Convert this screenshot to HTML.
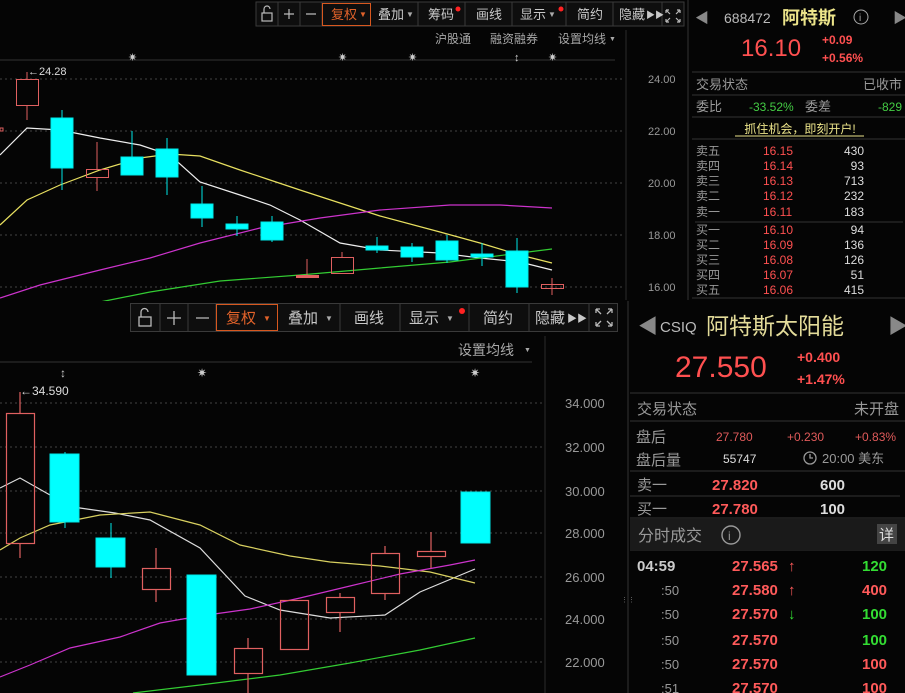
<!DOCTYPE html>
<html><head><meta charset="utf-8"><style>
html,body{margin:0;padding:0;background:#000;width:905px;height:693px;overflow:hidden}
svg{display:block}
text{font-family:"Liberation Sans","Noto Sans CJK SC",sans-serif}
</style></head><body>
<svg width="905" height="693" viewBox="0 0 905 693" xmlns="http://www.w3.org/2000/svg">
<rect width="905" height="693" fill="#050505"/>

<!-- ============ TOP WINDOW ============ -->
<g stroke="#3a3a3a" fill="#0e0e0e">
<rect x="256" y="2" width="428" height="24"/>
</g>
<g stroke="#3a3a3a">
<line x1="278" y1="2" x2="278" y2="26"/><line x1="300" y1="2" x2="300" y2="26"/><line x1="322" y1="2" x2="322" y2="26"/>
<line x1="418" y1="2" x2="418" y2="26"/><line x1="465" y1="2" x2="465" y2="26"/><line x1="512" y1="2" x2="512" y2="26"/>
<line x1="566" y1="2" x2="566" y2="26"/><line x1="613" y1="2" x2="613" y2="26"/><line x1="662" y1="2" x2="662" y2="26"/>
</g>
<rect x="322.5" y="3.5" width="48" height="22" fill="none" stroke="#d8581f"/>
<g font-size="13" fill="#c8c8c8">
<text x="331" y="19" fill="#e0622a">复权</text><text x="359" y="17" font-size="8" fill="#e0622a">▼</text>
<text x="378" y="19">叠加</text><text x="406" y="17" font-size="8" fill="#aaa">▼</text>
<text x="428" y="19">筹码</text><circle cx="458" cy="9" r="2.5" fill="#f22"/>
<text x="476" y="19">画线</text>
<text x="520" y="19">显示</text><text x="548" y="17" font-size="8" fill="#aaa">▼</text><circle cx="561" cy="9" r="2.5" fill="#f22"/>
<text x="577" y="19">简约</text>
<text x="619" y="19">隐藏</text><text x="646" y="18" font-size="9">▶▶</text>
</g>
<g stroke="#bbb" fill="none" stroke-width="1.2">
<rect x="262" y="13" width="10" height="8"/><path d="M264 13 v-4 a3 3 0 0 1 6 0"/>
<path d="M284 14 h10 M289 9 v10 M306 14 h10"/>
<path d="M666 10 l4 4 M666 10 h3 M666 10 v3 M680 10 l-4 4 M680 10 h-3 M680 10 v3 M666 22 l4 -4 M666 22 h3 M666 22 v-3 M680 22 l-4 -4 M680 22 h-3 M680 22 v-3"/>
</g>
<g font-size="12" fill="#a8a8a8">
<text x="435" y="43">沪股通</text><text x="490" y="43">融资融券</text><text x="558" y="43">设置均线</text><text x="609" y="41" font-size="7">▼</text>
</g>
<line x1="0" y1="60" x2="615" y2="60" stroke="#333"/>
<g fill="#ccc" font-size="11"><text x="128" y="61">✷</text><text x="338" y="61">✷</text><text x="408" y="61">✷</text><text x="514" y="61">↕</text><text x="548" y="61">✷</text></g>
<!-- grid -->
<g stroke="#444" stroke-dasharray="2,3">
<line x1="0" y1="79" x2="625" y2="79"/><line x1="0" y1="131" x2="625" y2="131"/><line x1="0" y1="183" x2="625" y2="183"/><line x1="0" y1="235" x2="625" y2="235"/><line x1="0" y1="287" x2="625" y2="287"/>
</g>
<line x1="626" y1="30" x2="626" y2="300" stroke="#2a2a2a"/>
<g font-family="Liberation Mono" font-size="11" fill="#999">
<text x="648" y="83">24.00</text><text x="648" y="135">22.00</text><text x="648" y="187">20.00</text><text x="648" y="239">18.00</text><text x="648" y="291">16.00</text>
</g>
<!-- MAs top -->
<g fill="none" stroke-width="1.2">
<polyline stroke="#eeeeee" points="0,155 27,128 60,130 100,138 140,145 170,155 200,182 240,195 270,205 300,220 340,243 380,250 440,253 480,258 520,262 552,270"/>
<polyline stroke="#e8e060" points="0,225 27,200 60,185 100,170 140,158 170,154 200,156 240,170 270,180 300,190 340,203 380,216 440,232 480,243 520,255 552,263"/>
<polyline stroke="#cc33cc" points="0,298 40,285 100,270 150,258 200,243 260,228 320,218 380,210 450,205 500,205 552,208"/>
<polyline stroke="#33cc33" points="100,302 150,292 220,281 300,275 380,268 450,262 520,253 552,249"/>
</g>
<!-- candles top -->
<g stroke="#e06060" fill="none">
<rect x="0" y="128" width="3" height="3"/>
<line x1="27" y1="72" x2="27" y2="79"/><line x1="27" y1="105" x2="27" y2="120"/><rect x="16.5" y="79.5" width="22" height="26"/>
<line x1="97" y1="142" x2="97" y2="169"/><line x1="97" y1="177" x2="97" y2="191"/><rect x="86.5" y="169.5" width="22" height="8"/>
<line x1="307" y1="259" x2="307" y2="276"/><rect x="296.5" y="275.5" width="22" height="2" fill="#e06060"/>
<line x1="342" y1="252" x2="342" y2="257"/><rect x="331.5" y="257.5" width="22" height="16"/>
<line x1="552" y1="278" x2="552" y2="295"/><rect x="541.5" y="284.5" width="22" height="4"/>
</g>
<g stroke="#00e8e8" fill="#00ffff">
<line x1="62" y1="110" x2="62" y2="190"/><rect x="51" y="118" width="22" height="50"/>
<line x1="132" y1="131" x2="132" y2="175"/><rect x="121" y="157" width="22" height="18"/>
<line x1="167" y1="138" x2="167" y2="195"/><rect x="156" y="149" width="22" height="28"/>
<line x1="202" y1="186" x2="202" y2="227"/><rect x="191" y="204" width="22" height="14"/>
<line x1="237" y1="216" x2="237" y2="236"/><rect x="226" y="224" width="22" height="5"/>
<line x1="272" y1="216" x2="272" y2="242"/><rect x="261" y="222" width="22" height="18"/>
<line x1="377" y1="237" x2="377" y2="253"/><rect x="366" y="246" width="22" height="4"/>
<line x1="412" y1="243" x2="412" y2="262"/><rect x="401" y="247" width="22" height="10"/>
<line x1="447" y1="235" x2="447" y2="263"/><rect x="436" y="241" width="22" height="19"/>
<line x1="482" y1="243" x2="482" y2="266"/><rect x="471" y="254" width="22" height="3"/>
<line x1="517" y1="238" x2="517" y2="293"/><rect x="506" y="251" width="22" height="36"/>
</g>
<text x="28" y="75" font-family="Liberation Mono" font-size="11" fill="#ddd">←24.28</text>

<!-- top right panel -->
<line x1="688" y1="0" x2="688" y2="300" stroke="#333"/>
<g font-size="13">
<text x="695" y="23" fill="#888" font-size="14">◀</text>
<text x="724" y="23" fill="#bbb" font-size="14">688472</text>
<text x="782" y="24" fill="#ece48a" font-size="18" font-weight="bold">阿特斯</text>
<circle cx="861" cy="17" r="7" fill="none" stroke="#aaa"/><text x="859" y="21" fill="#aaa" font-size="10">i</text>
<text x="893" y="23" fill="#888" font-size="14">▶</text>
<text x="741" y="56" fill="#ff5050" font-size="24">16.10</text>
<text x="822" y="44" fill="#ff5050" font-size="12" font-weight="bold">+0.09</text>
<text x="822" y="62" fill="#ff5050" font-size="12" font-weight="bold">+0.56%</text>
</g>
<g stroke="#333"><line x1="692" y1="72" x2="905" y2="72"/><line x1="692" y1="95" x2="905" y2="95"/><line x1="692" y1="117" x2="905" y2="117"/><line x1="692" y1="139" x2="905" y2="139"/><line x1="695" y1="222" x2="903" y2="222"/><line x1="692" y1="298" x2="905" y2="298"/></g>
<g font-size="13" fill="#999">
<text x="696" y="89">交易状态</text><text x="902" y="89" text-anchor="end">已收市</text>
<text x="696" y="111">委比</text><text x="749" y="111" fill="#44cc44" font-size="12">-33.52%</text><text x="805" y="111">委差</text><text x="902" y="111" text-anchor="end" fill="#44cc44" font-size="12">-829</text>
</g>
<text x="800" y="133" font-size="12" fill="#ece48a" text-anchor="middle">抓住机会，即刻开户!</text>
<line x1="735" y1="136" x2="864" y2="136" stroke="#ece48a"/>
<g font-size="12" fill="#999">
<text x="696" y="155">卖五</text><text x="696" y="170">卖四</text><text x="696" y="185">卖三</text><text x="696" y="200">卖二</text><text x="696" y="216">卖一</text>
<text x="696" y="234">买一</text><text x="696" y="249">买二</text><text x="696" y="264">买三</text><text x="696" y="279">买四</text><text x="696" y="294">买五</text>
</g>
<g font-size="12" fill="#ff5050">
<text x="763" y="155">16.15</text><text x="763" y="170">16.14</text><text x="763" y="185">16.13</text><text x="763" y="200">16.12</text><text x="763" y="216">16.11</text>
<text x="763" y="234">16.10</text><text x="763" y="249">16.09</text><text x="763" y="264">16.08</text><text x="763" y="279">16.07</text><text x="763" y="294">16.06</text>
</g>
<g font-size="12" fill="#ddd" text-anchor="end">
<text x="864" y="155">430</text><text x="864" y="170">93</text><text x="864" y="185">713</text><text x="864" y="200">232</text><text x="864" y="216">183</text>
<text x="864" y="234">94</text><text x="864" y="249">136</text><text x="864" y="264">126</text><text x="864" y="279">51</text><text x="864" y="294">415</text>
</g>

<!-- ============ BOTTOM WINDOW ============ -->
<rect x="0" y="301" width="628" height="392" fill="#050505"/>
<rect x="628" y="301" width="277" height="392" fill="#050505"/>
<rect x="130.5" y="303.5" width="487" height="28" fill="#0e0e0e" stroke="#3a3a3a"/>
<g stroke="#3a3a3a">
<line x1="160" y1="304" x2="160" y2="331"/><line x1="188" y1="304" x2="188" y2="331"/><line x1="216" y1="304" x2="216" y2="331"/>
<line x1="340" y1="304" x2="340" y2="331"/><line x1="400" y1="304" x2="400" y2="331"/><line x1="469" y1="304" x2="469" y2="331"/>
<line x1="529" y1="304" x2="529" y2="331"/><line x1="589" y1="304" x2="589" y2="331"/>
</g>
<rect x="216.5" y="304.5" width="61" height="26" fill="none" stroke="#d8581f"/>
<g font-size="15" fill="#c8c8c8">
<text x="226" y="323" fill="#e0622a">复权</text><text x="263" y="321" font-size="8" fill="#e0622a">▼</text>
<text x="288" y="323">叠加</text><text x="325" y="321" font-size="8" fill="#aaa">▼</text>
<text x="354" y="323">画线</text>
<text x="409" y="323">显示</text><text x="446" y="321" font-size="8" fill="#aaa">▼</text><circle cx="462" cy="311" r="3" fill="#f22"/>
<text x="483" y="323">简约</text>
<text x="535" y="323">隐藏</text><text x="567" y="322" font-size="10">▶▶</text>
</g>
<g stroke="#bbb" fill="none" stroke-width="1.3">
<rect x="139" y="317" width="12" height="9"/><path d="M141 317 v-5 a3.5 3.5 0 0 1 7 0"/>
<path d="M167 318 h14 M174 311 v14 M196 318 h13"/>
<path d="M596 309 l5 5 M596 309 h4 M596 309 v4 M612 309 l-5 5 M612 309 h-4 M612 309 v4 M596 326 l5 -5 M596 326 h4 M596 326 v-4 M612 326 l-5 -5 M612 326 h-4 M612 326 v-4"/>
</g>
<text x="458" y="355" font-size="14" fill="#a8a8a8">设置均线</text><text x="524" y="352" font-size="7" fill="#a8a8a8">▼</text>
<line x1="0" y1="362" x2="532" y2="362" stroke="#333"/>
<g fill="#ccc" font-size="12"><text x="60" y="377">↕</text><text x="197" y="377">✷</text><text x="470" y="377">✷</text></g>
<g stroke="#444" stroke-dasharray="2,3">
<line x1="0" y1="403" x2="542" y2="403"/><line x1="0" y1="447" x2="542" y2="447"/><line x1="0" y1="491" x2="542" y2="491"/><line x1="0" y1="533" x2="542" y2="533"/><line x1="0" y1="577" x2="542" y2="577"/><line x1="0" y1="619" x2="542" y2="619"/><line x1="0" y1="662" x2="542" y2="662"/>
</g>
<line x1="545" y1="336" x2="545" y2="693" stroke="#2a2a2a"/>
<g font-family="Liberation Mono" font-size="13" fill="#999">
<text x="565" y="408">34.000</text><text x="565" y="452">32.000</text><text x="565" y="496">30.000</text><text x="565" y="538">28.000</text><text x="565" y="582">26.000</text><text x="565" y="624">24.000</text><text x="565" y="667">22.000</text>
</g>
<g fill="none" stroke-width="1.2">
<polyline stroke="#dddddd" points="0,488 20,478 50,495 80,508 115,513 150,520 200,548 245,596 280,610 330,618 385,615 420,592 475,569"/>
<polyline stroke="#d8d060" points="0,550 20,538 50,525 100,515 150,512 200,525 240,545 290,556 330,562 380,566 430,572 475,583"/>
<polyline stroke="#cc33cc" points="0,677 30,665 70,648 120,637 160,623 200,616 250,609 300,598 350,586 400,574 450,565 475,560"/>
<polyline stroke="#33cc33" points="133,693 200,685 280,675 350,663 420,650 475,638"/>
</g>
<g stroke="#e06060" fill="none" stroke-width="1.2">
<line x1="20" y1="392" x2="20" y2="413"/><line x1="20" y1="543" x2="20" y2="558"/><rect x="6.5" y="413.5" width="28" height="130"/>
<line x1="156" y1="548" x2="156" y2="568"/><line x1="156" y1="589" x2="156" y2="602"/><rect x="142.5" y="568.5" width="28" height="21"/>
<line x1="248" y1="638" x2="248" y2="648"/><line x1="248" y1="673" x2="248" y2="693"/><rect x="234.5" y="648.5" width="28" height="25"/>
<rect x="280.5" y="600.5" width="28" height="49"/>
<line x1="340" y1="593" x2="340" y2="597"/><line x1="340" y1="612" x2="340" y2="632"/><rect x="326.5" y="597.5" width="28" height="15"/>
<line x1="385" y1="546" x2="385" y2="553"/><line x1="385" y1="593" x2="385" y2="600"/><rect x="371.5" y="553.5" width="28" height="40"/>
<line x1="431" y1="532" x2="431" y2="551"/><line x1="431" y1="556" x2="431" y2="568"/><rect x="417.5" y="551.5" width="28" height="5"/>
</g>
<g stroke="#00e8e8" fill="#00ffff">
<line x1="65" y1="452" x2="65" y2="528"/><rect x="50" y="454" width="29" height="68"/>
<line x1="111" y1="523" x2="111" y2="578"/><rect x="96" y="538" width="29" height="29"/>
<rect x="187" y="575" width="29" height="100"/>
<rect x="461" y="492" width="29" height="51"/>
</g>
<text x="20" y="395" font-family="Liberation Mono" font-size="12" fill="#ddd">←34.590</text>

<!-- bottom right panel -->
<line x1="628" y1="301" x2="628" y2="693" stroke="#333"/>
<g fill="#777" font-size="7"><text x="621" y="602">⋮⋮</text></g>
<text x="638" y="333" fill="#888" font-size="20">◀</text>
<text x="660" y="332" fill="#bbb" font-size="15">CSIQ</text>
<text x="706" y="334" fill="#e4dc9a" font-size="23">阿特斯太阳能</text>
<text x="888" y="333" fill="#888" font-size="20">▶</text>
<text x="675" y="377" fill="#ff5050" font-size="30">27.550</text>
<text x="797" y="362" fill="#ff5050" font-size="14" font-weight="bold">+0.400</text>
<text x="797" y="384" fill="#ff5050" font-size="14" font-weight="bold">+1.47%</text>
<g stroke="#333"><line x1="630" y1="393" x2="905" y2="393"/><line x1="630" y1="421" x2="905" y2="421"/><line x1="630" y1="471" x2="905" y2="471"/><line x1="630" y1="496" x2="900" y2="496"/><line x1="630" y1="518" x2="905" y2="518"/><line x1="630" y1="550" x2="905" y2="550"/></g>
<rect x="630" y="519" width="275" height="31" fill="#1a1a1a"/>
<g font-size="15" fill="#999">
<text x="637" y="414">交易状态</text><text x="899" y="414" text-anchor="end">未开盘</text>
<text x="636" y="442">盘后</text><text x="636" y="465">盘后量</text>
<text x="637" y="490">卖一</text><text x="637" y="514">买一</text>
<text x="638" y="541" font-size="16">分时成交</text>
</g>
<g font-size="12" fill="#e05a5a" font-family="Liberation Mono">
<text x="716" y="441">27.780</text><text x="787" y="441">+0.230</text><text x="855" y="441">+0.83%</text>
</g>
<text x="723" y="463" font-size="12" fill="#ddd" font-family="Liberation Mono">55747</text>
<circle cx="810" cy="458" r="6" fill="none" stroke="#999" stroke-width="1.3"/><path d="M810 454 v4 h3" stroke="#999" fill="none" stroke-width="1.3"/>
<text x="822" y="463" font-size="13" fill="#999">20:00 美东</text>
<g font-size="15" font-weight="bold" fill="#ff5a5a"><text x="712" y="490">27.820</text><text x="712" y="514">27.780</text></g>
<g font-size="15" font-weight="bold" fill="#ddd"><text x="820" y="490">600</text><text x="820" y="514">100</text></g>
<circle cx="731" cy="535" r="9" fill="none" stroke="#999" stroke-width="1.4"/><text x="728" y="540" font-size="12" fill="#999">i</text>
<rect x="877" y="524" width="20" height="20" fill="#444"/><text x="879" y="540" font-size="15" fill="#ddd">详</text>
<g font-size="15" font-weight="bold">
<text x="637" y="571" fill="#ccc">04:59</text>
<g fill="#999" font-weight="normal" font-size="13"><text x="661" y="595">:50</text><text x="661" y="619">:50</text><text x="661" y="645">:50</text><text x="661" y="669">:50</text><text x="661" y="693">:51</text></g>
<g fill="#ff5a5a"><text x="732" y="571">27.565</text><text x="732" y="595">27.580</text><text x="732" y="619">27.570</text><text x="732" y="645">27.570</text><text x="732" y="669">27.570</text><text x="732" y="693">27.570</text></g>
<text x="788" y="571" fill="#ff5a5a">↑</text><text x="788" y="595" fill="#ff5a5a">↑</text><text x="788" y="619" fill="#33dd33">↓</text>
<text x="862" y="571" fill="#33dd33">120</text><text x="862" y="595" fill="#ff5a5a">400</text><text x="862" y="619" fill="#33dd33">100</text><text x="862" y="645" fill="#33dd33">100</text><text x="862" y="669" fill="#ff5a5a">100</text><text x="862" y="693" fill="#ff5a5a">100</text>
</g>
</svg>
</body></html>
